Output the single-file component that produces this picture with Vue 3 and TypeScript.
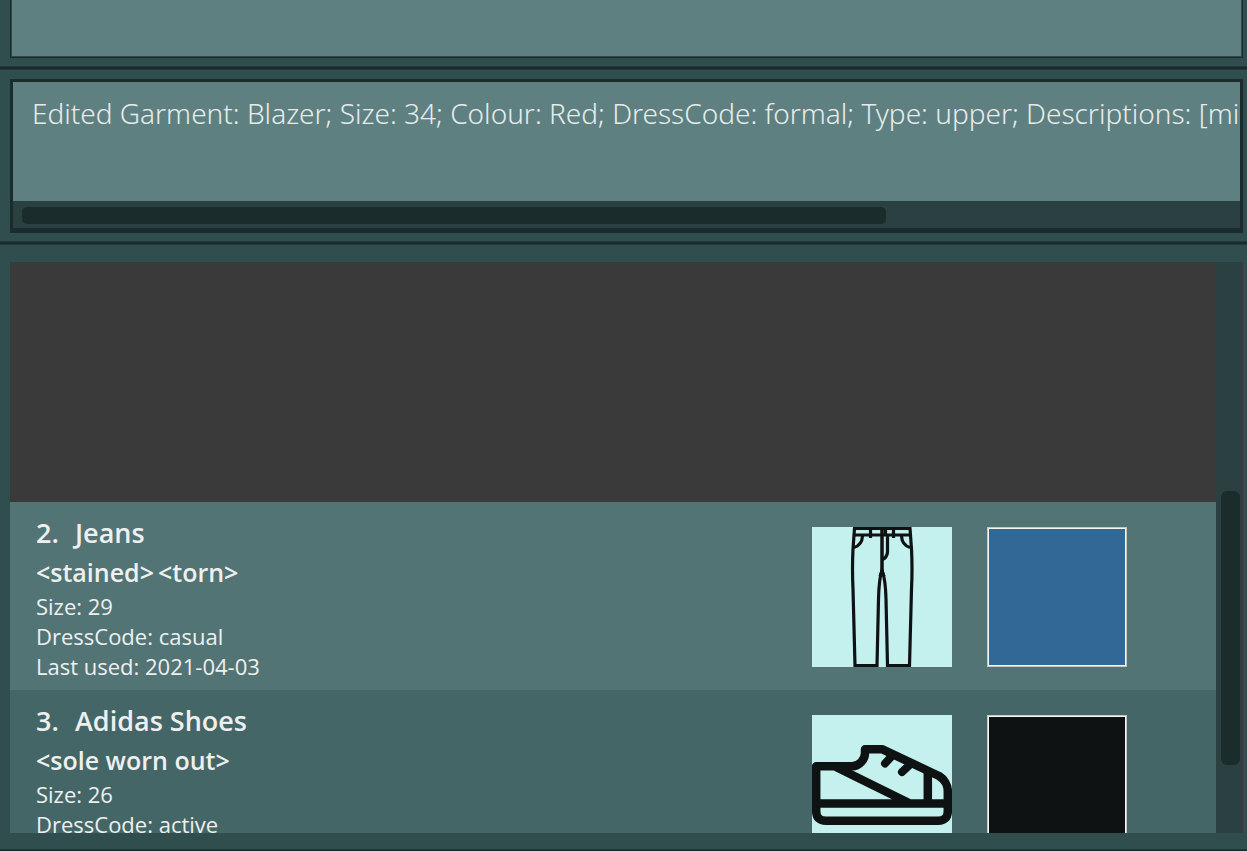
<script setup lang="ts">
import { ref } from 'vue'

interface Garment {
  id: number
  name: string
  tags: string[]
  details: string[]
  icon: 'jeans' | 'shoe'
  colour: 'blue' | 'black'
}

const command = ref('')
const result = ref(
  'Edited Garment: Blazer; Size: 34; Colour: Red; DressCode: formal; Type: upper; Descriptions: [missing button]',
)

const garments: Garment[] = [
  {
    id: 2,
    name: 'Jeans',
    tags: ['<stained>', '<torn>'],
    details: ['Size: 29', 'DressCode: casual', 'Last used: 2021-04-03'],
    icon: 'jeans',
    colour: 'blue',
  },
  {
    id: 3,
    name: 'Adidas Shoes',
    tags: ['<sole worn out>'],
    details: ['Size: 26', 'DressCode: active'],
    icon: 'shoe',
    colour: 'black',
  },
]
</script>

<template>
  <main class="window">
    <section class="pane command-pane">
      <input v-model="command" class="command" type="text" aria-label="Command" />
    </section>
    <div class="divider"></div>
    <section class="pane result-pane">
      <div class="result">
        <textarea class="result-text" :value="result" readonly wrap="off" aria-label="Result"></textarea>
        <div class="track-x"><div class="thumb-x"></div></div>
      </div>
    </section>
    <div class="divider"></div>
    <section class="list-pane">
      <div class="list">
        <ul class="cards">
          <li class="spacer" aria-hidden="true"></li>
          <li v-for="g in garments" :key="g.id" class="card">
            <div class="info">
              <h2 class="title"><span class="number">{{ g.id }}.</span><span>{{ g.name }}</span></h2>
              <div class="tags"><span v-for="t in g.tags" :key="t">{{ t }}</span></div>
              <p v-for="d in g.details" :key="d" class="detail">{{ d }}</p>
            </div>
            <div class="picture">
              <svg v-if="g.icon === 'jeans'" viewBox="0 0 140 140" fill="none" stroke="#0e1213" stroke-width="3.2">
                <path d="M42.500 1.500H98L99.500 22Q100.500 42 99.500 62L97.500 138.500H75.500L74 72Q73.500 52 70 43Q67 52 66.500 72L65 138.500H43L41 62Q40 42 41 22Z" />
                <path d="M42 8H99M58.500 1V11M81.500 1V11M73.500 1V8" />
                <path d="M70 1V45" stroke-width="3.500" />
                <path d="M70 41L73 49H67Z" fill="#0e1213" stroke-width="1" />
                <path d="M75.500 8V25Q75 31 70 32.500M50.500 9Q50 18 42 20.500M89.500 9Q90 18 98 20.500" />
              </svg>
              <svg v-else viewBox="0 0 140 140" fill="none" stroke="#0e1213" stroke-width="8.500" stroke-linejoin="round">
                <path d="M4.200 51.200H40C47 51 53 45 53 38V34.200H70L127 61C132 64 135.800 70 135.800 76V96Q135.800 105.800 126 105.800H14Q4.200 105.800 4.200 96Z" />
                <path d="M4 88.500H136M24 52L98 88.500M115.800 56V88" />
                <path d="M79 42L73 48.500M97 50.500L90 57" stroke-linecap="round" stroke-width="8" />
              </svg>
            </div>
            <div class="swatch" :class="g.colour"></div>
          </li>
        </ul>
        <div class="track-y"><div class="thumb-y"></div></div>
      </div>
    </section>
    <div class="footer-line"></div>
  </main>
</template>

<style>
body {
  margin: 0;
  background: #304e4e;
}
</style>

<style scoped>
* {
  box-sizing: border-box;
}

.window {
  display: flex;
  flex-direction: column;
  height: 100vh;
  overflow: hidden;
  background: #304e4e;
  color: #eef0f0;
  font-family: "Open Sans", "Noto Sans", sans-serif;
}

.pane {
  flex: none;
  padding: 0 4px 0 10px;
}

.command-pane {
  padding-bottom: 8px;
}

.command {
  display: block;
  width: 100%;
  height: 58px;
  padding: 0 20px;
  border: 1px solid #1b2c2c;
  border-top: 0;
  outline: 0;
  background: #5f8080;
  box-shadow: inset -1px -1px #2f4848, inset 1px 0 #2f4848;
  color: inherit;
  font: 300 28px "Noto Sans", sans-serif;
}

.divider {
  flex: none;
  height: 4px;
  border: solid #233a3a;
  border-width: 1px 0;
  background: #1a2a2a;
}

.result-pane {
  padding-top: 9px;
  padding-bottom: 8px;
}

.result {
  border: 3px solid #1b2c2c;
  border-bottom-width: 5px;
  background: #2b4141;
}

.result-text {
  display: block;
  width: 100%;
  height: 119px;
  padding: 11px 0 0 19px;
  border: 0;
  outline: 0;
  resize: none;
  overflow: hidden;
  background: #5f8080;
  color: #e6ecec;
  font: 300 28px/40px "Noto Sans", sans-serif;
}

.track-x {
  height: 27px;
  padding: 6px 9px 4px;
}

.thumb-x {
  width: 71.5%;
  height: 17px;
  border-radius: 5px;
  background: #1b2c2c;
}

.list-pane {
  flex: 1;
  min-height: 0;
  padding: 17px 4px 16px 10px;
}

.list {
  display: flex;
  height: 100%;
  overflow: hidden;
  background: #3a3a3a;
}

.cards {
  flex: 1;
  min-width: 0;
  margin: 0;
  padding: 0;
  list-style: none;
}

.spacer {
  height: 240px;
}

.card {
  display: flex;
  align-items: flex-start;
  height: 188px;
  padding: 0 89px 0 26px;
  background: #527474;
}

.card:nth-child(odd) {
  background: #456666;
}

.info {
  flex: 1;
  min-width: 0;
  padding-top: 10px;
}

.title {
  display: flex;
  margin: 0;
  font-size: 27px;
  font-weight: 600;
  line-height: 42px;
}

.number {
  width: 39px;
}

.tags {
  display: flex;
  gap: 4px;
  font-size: 25px;
  font-weight: 600;
  line-height: 37px;
}

.detail {
  margin: 0;
  font-size: 22px;
  line-height: 30px;
}

.picture {
  width: 140px;
  height: 140px;
  margin: 25px 35px 0 0;
  background: #c4f0ee;
}

.picture svg {
  display: block;
  width: 100%;
}

.swatch {
  width: 140px;
  height: 140px;
  margin-top: 25px;
  border: 1px solid #c8c8bf;
  box-shadow: inset 0 0 0 1px #f4f6f8;
}

.swatch.blue {
  background: #316896;
}

.swatch.black {
  background: #0e1212;
}

.track-y {
  display: flex;
  flex-direction: column;
  width: 27px;
  padding: 0 2px 0 5px;
  border-right: 1px solid #3a3a3a;
  background: #2b4141;
}

.track-y::before {
  content: "";
  flex: 229;
}

.track-y::after {
  content: "";
  flex: 68;
}

.thumb-y {
  flex: 274;
  border-radius: 6px;
  background: #1b2c2c;
}

.footer-line {
  flex: none;
  height: 2px;
  border-top: 1px solid #233a3a;
  background: #1a2a2a;
}
</style>
